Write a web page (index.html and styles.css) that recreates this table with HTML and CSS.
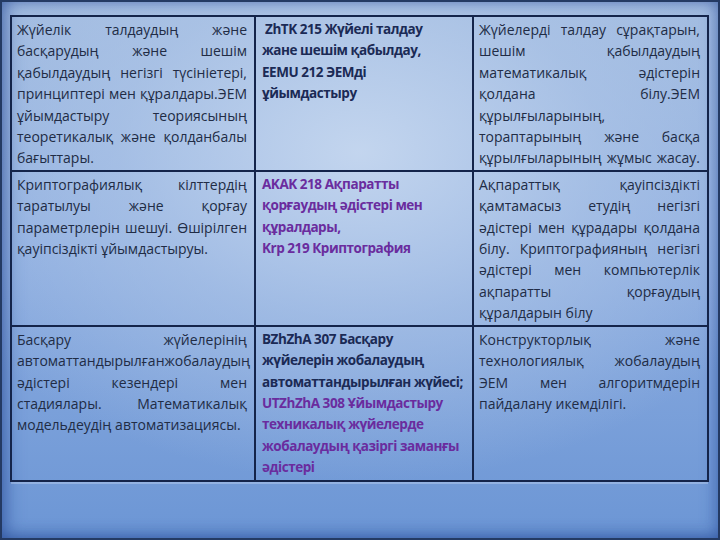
FILE: index.html
```html
<!DOCTYPE html>
<html lang="kk">
<head>
<meta charset="utf-8">
<title>Пәндер кестесі</title>
<link rel="stylesheet" href="styles.css">
</head>
<body>
<div class="slide">
  <div class="grid">
    <div class="cell desc">
      <span class="ln">Жүйелік талдаудың және</span>
      <span class="ln">басқарудың және шешім</span>
      <span class="ln">қабылдаудың негізгі түсініетері,</span>
      <span class="ln">принциптері мен құралдары.ЭЕМ</span>
      <span class="ln">ұйымдастыру теориясының</span>
      <span class="ln">теоретикалық және қолданбалы</span>
      <span class="ln end">бағыттары.</span>
    </div>
    <div class="cell course navy">
      <span class="cl">&nbsp;ZhTK 215 Жүйелі талдау</span>
      <span class="cl">жане шешім қабылдау,</span>
      <span class="cl">EEMU 212 ЭЕМді</span>
      <span class="cl">ұйымдастыру</span>
    </div>
    <div class="cell desc">
      <span class="ln">Жүйелерді талдау сұрақтарын,</span>
      <span class="ln">шешім қабылдаудың</span>
      <span class="ln">математикалық әдістерін</span>
      <span class="ln">қолдана білу.ЭЕМ</span>
      <span class="ln">құрылғыларының,</span>
      <span class="ln">тораптарының және басқа</span>
      <span class="ln">құрылғыларының жұмыс жасау.</span>
    </div>

    <div class="cell desc">
      <span class="ln">Криптографиялық кілттердің</span>
      <span class="ln">таратылуы және қорғау</span>
      <span class="ln">параметрлерін шешуі. Өшірілген</span>
      <span class="ln end">қауіпсіздікті ұйымдастыруы.</span>
    </div>
    <div class="cell course purple">
      <span class="cl">AKAK 218 Ақпаратты</span>
      <span class="cl">қорғаудың әдістері мен</span>
      <span class="cl">құралдары,</span>
      <span class="cl">Krp 219 Криптография</span>
    </div>
    <div class="cell desc">
      <span class="ln">Ақпараттық қауіпсіздікті</span>
      <span class="ln">қамтамасыз етудің негізгі</span>
      <span class="ln">әдістері мен құрадары қолдана</span>
      <span class="ln">білу. Криптографияның негізгі</span>
      <span class="ln">әдістері мен компьютерлік</span>
      <span class="ln">ақпаратты қорғаудың</span>
      <span class="ln end">құралдарын білу</span>
    </div>

    <div class="cell desc">
      <span class="ln">Басқару жүйелерінің</span>
      <span class="ln">автоматтандырылғанжобалаудың</span>
      <span class="ln">әдістері кезендері мен</span>
      <span class="ln">стадиялары. Математикалық</span>
      <span class="ln end">модельдеудің автоматизациясы.</span>
    </div>
    <div class="cell course">
      <span class="cl navy">BZhZhA 307 Басқару</span>
      <span class="cl navy">жүйелерін жобалаудың</span>
      <span class="cl navy">автоматтандырылған жүйесі;</span>
      <span class="cl purple">UTZhZhA 308 Ұйымдастыру</span>
      <span class="cl purple">техникалық жүйелерде</span>
      <span class="cl purple">жобалаудың қазіргі заманғы</span>
      <span class="cl purple">әдістері</span>
    </div>
    <div class="cell desc">
      <span class="ln">Конструкторлық және</span>
      <span class="ln">технологиялық жобалаудың</span>
      <span class="ln">ЭЕМ мен алгоритмдерін</span>
      <span class="ln end">пайдалану икемділігі.</span>
    </div>
  </div>
</div>
</body>
</html>
```
FILE: styles.css
```css
html, body {
  margin: 0;
  padding: 0;
}

body {
  width: 720px;
  height: 540px;
  overflow: hidden;
}

.slide {
  box-sizing: border-box;
  width: 720px;
  height: 540px;
  padding: 15px 0 0 10px;
  border: 2px solid #243a63;
  background:
    radial-gradient(ellipse 75% 70% at 50% 28%, rgba(200, 217, 240, 0.9) 0%, rgba(176, 199, 232, 0.6) 45%, rgba(140, 176, 226, 0) 88%),
    linear-gradient(180deg, #a0badf 0%, #8dade0 45%, #6c96d5 100%);
  box-shadow: inset 8px 0 18px -4px rgba(38, 74, 150, 0.6), inset -6px 0 16px -4px rgba(38, 74, 150, 0.45), inset 0 -8px 16px -6px rgba(38, 74, 150, 0.4);
  font-family: "Open Sans", "Noto Sans", sans-serif;
  font-size: 14px;
  line-height: 21.4px;
  color: #212c45;
}

.grid {
  display: grid;
  grid-template-columns: 244px 218px 235px;
  width: max-content;
  margin-top: -2px;
  margin-left: -2px;
  border-top: 2px solid #14244a;
  border-left: 2px solid #14244a;
  box-shadow: 0 3px 0 -1px rgba(225, 236, 252, 0.3);
}

.cell {
  border-right: 2px solid #14244a;
  border-bottom: 2px solid #14244a;
  padding: 2px 7px 1px 5px;
}

.ln {
  display: block;
  text-align: justify;
  text-align-last: justify;
}

.ln.end {
  text-align-last: left;
}

.course {
  font-weight: 700;
  font-size: 13.5px;
  letter-spacing: -0.45px;
  padding-left: 6px;
}

.cl {
  display: block;
  white-space: nowrap;
}

.navy {
  color: #1b2a55;
}

.purple {
  color: #6a2c9e;
}
```
